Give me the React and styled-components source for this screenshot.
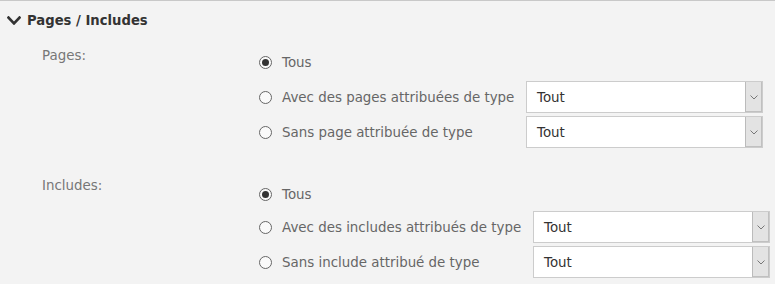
import React from "react";
import styled, { createGlobalStyle } from "styled-components";

const Global = createGlobalStyle`
  html, body { margin: 0; padding: 0; background: #f3f3f3; }
  body { font-family: "DejaVu Sans", Verdana, sans-serif; }
`;

const Panel = styled.div`
  border-top: 1px solid #c8c8c8;
  background: #f3f3f3;
  width: 775px;
  height: 283px;
  overflow: hidden;
`;

const Header = styled.div`
  display: flex;
  align-items: center;
  gap: 6px;
  height: 39px;
  padding-left: 7px;
  font-weight: bold;
  font-size: 13.2px;
  color: #333;
`;

const Group = styled.div`
  display: grid;
  grid-template-columns: 217px 1fr;
  padding-left: 42px;
  margin-top: ${(p) => p.$mt}px;
`;

const Label = styled.div`
  font-size: 13.4px;
  line-height: 18px;
  padding-top: ${(p) => p.$pt || 0}px;
  color: #777;
`;

const Options = styled.div`
  display: flex;
  flex-direction: column;
  gap: 3px;
`;

const Row = styled.label`
  display: flex;
  align-items: center;
  height: ${(p) => (p.$short ? 31 : 32)}px;
  padding-top: ${(p) => p.$pt || 0}px;
  box-sizing: border-box;
  font-size: 13.4px;
  color: #666;
`;

const Radio = styled.span`
  width: 11px;
  height: 11px;
  border: 1px solid #666;
  border-radius: 50%;
  background: #fafafa;
  display: flex;
  align-items: center;
  justify-content: center;
  margin-right: 10px;
  flex: none;
  &::after {
    content: "";
    display: ${(p) => (p.$checked ? "block" : "none")};
    width: 7px;
    height: 7px;
    border-radius: 50%;
    background: #333;
  }
`;

const Select = styled.div`
  display: flex;
  width: 237px;
  height: 32px;
  box-sizing: border-box;
  margin-left: ${(p) => p.$ml}px;
  border: 1px solid #ccc;
  background: #fff;
`;

const SelectValue = styled.div`
  flex: 1;
  display: flex;
  align-items: center;
  padding-left: 10px;
  font-size: 13.4px;
  color: #333;
`;

const Arrow = styled.div`
  width: 16px;
  display: flex;
  align-items: center;
  justify-content: center;
  background: #e3e3e3;
  border-left: 1px solid #bbb;
  box-shadow: inset -1px -1px 0 #c0c0c0;
`;

const Chevron = () => (
  <svg width="14" height="9" viewBox="5 120 438 272" preserveAspectRatio="none">
    <path
      fill="#333"
      d="M207 381.5L12.7 187.1c-9.4-9.4-9.4-24.6 0-33.9l22.7-22.7c9.4-9.4 24.5-9.4 33.9 0L224 285.2l154.7-154.7c9.4-9.4 24.6-9.4 33.9 0l22.7 22.7c9.4 9.4 9.4 24.6 0 33.9L241 381.5c-9.4 9.4-24.6 9.4-34 0z"
    />
  </svg>
);

const SmallChevron = () => (
  <svg width="8" height="5" viewBox="0 0 8 5">
    <path d="M0.5 0.5 L4 4 L7.5 0.5" fill="none" stroke="#777" strokeWidth="1" />
  </svg>
);

const Dropdown = ({ ml }) => (
  <Select $ml={ml}>
    <SelectValue>Tout</SelectValue>
    <Arrow>
      <SmallChevron />
    </Arrow>
  </Select>
);

const groups = [
  {
    label: "Pages:",
    mt: 7,
    firstPad: 0,
    options: [
      { text: "Tous", checked: true },
      { text: "Avec des pages attribuées de type", select: true },
      { text: "Sans page attribuée de type", select: true },
    ],
    selectLeft: 526,
  },
  {
    label: "Includes:",
    mt: 29,
    firstPad: 3,
    options: [
      { text: "Tous", checked: true },
      { text: "Avec des includes attribués de type", select: true },
      { text: "Sans include attribué de type", select: true },
    ],
    selectLeft: 533,
  },
];

const OptionRow = ({ opt, selectLeft, pt }) => {
  const ref = React.useRef(null);
  const [ml, setMl] = React.useState(11);
  React.useLayoutEffect(() => {
    if (opt.select && ref.current) {
      const r = ref.current.getBoundingClientRect();
      setMl(Math.max(4, selectLeft - r.right));
    }
  }, [opt, selectLeft]);
  return (
    <Row $short={!opt.select} $pt={pt}>
      <Radio $checked={opt.checked} />
      <span ref={ref}>{opt.text}</span>
      {opt.select && <Dropdown ml={ml} />}
    </Row>
  );
};

export default function App() {
  return (
    <>
      <Global />
      <Panel>
        <Header>
          <Chevron />
          Pages / Includes
        </Header>
        {groups.map((g) => (
          <Group key={g.label} $mt={g.mt}>
            <Label $pt={0}>{g.label}</Label>
            <Options>
              {g.options.map((o, i) => (
                <OptionRow
                  key={o.text}
                  opt={o}
                  selectLeft={g.selectLeft}
                  pt={i === 0 ? g.firstPad : 0}
                />
              ))}
            </Options>
          </Group>
        ))}
      </Panel>
    </>
  );
}
